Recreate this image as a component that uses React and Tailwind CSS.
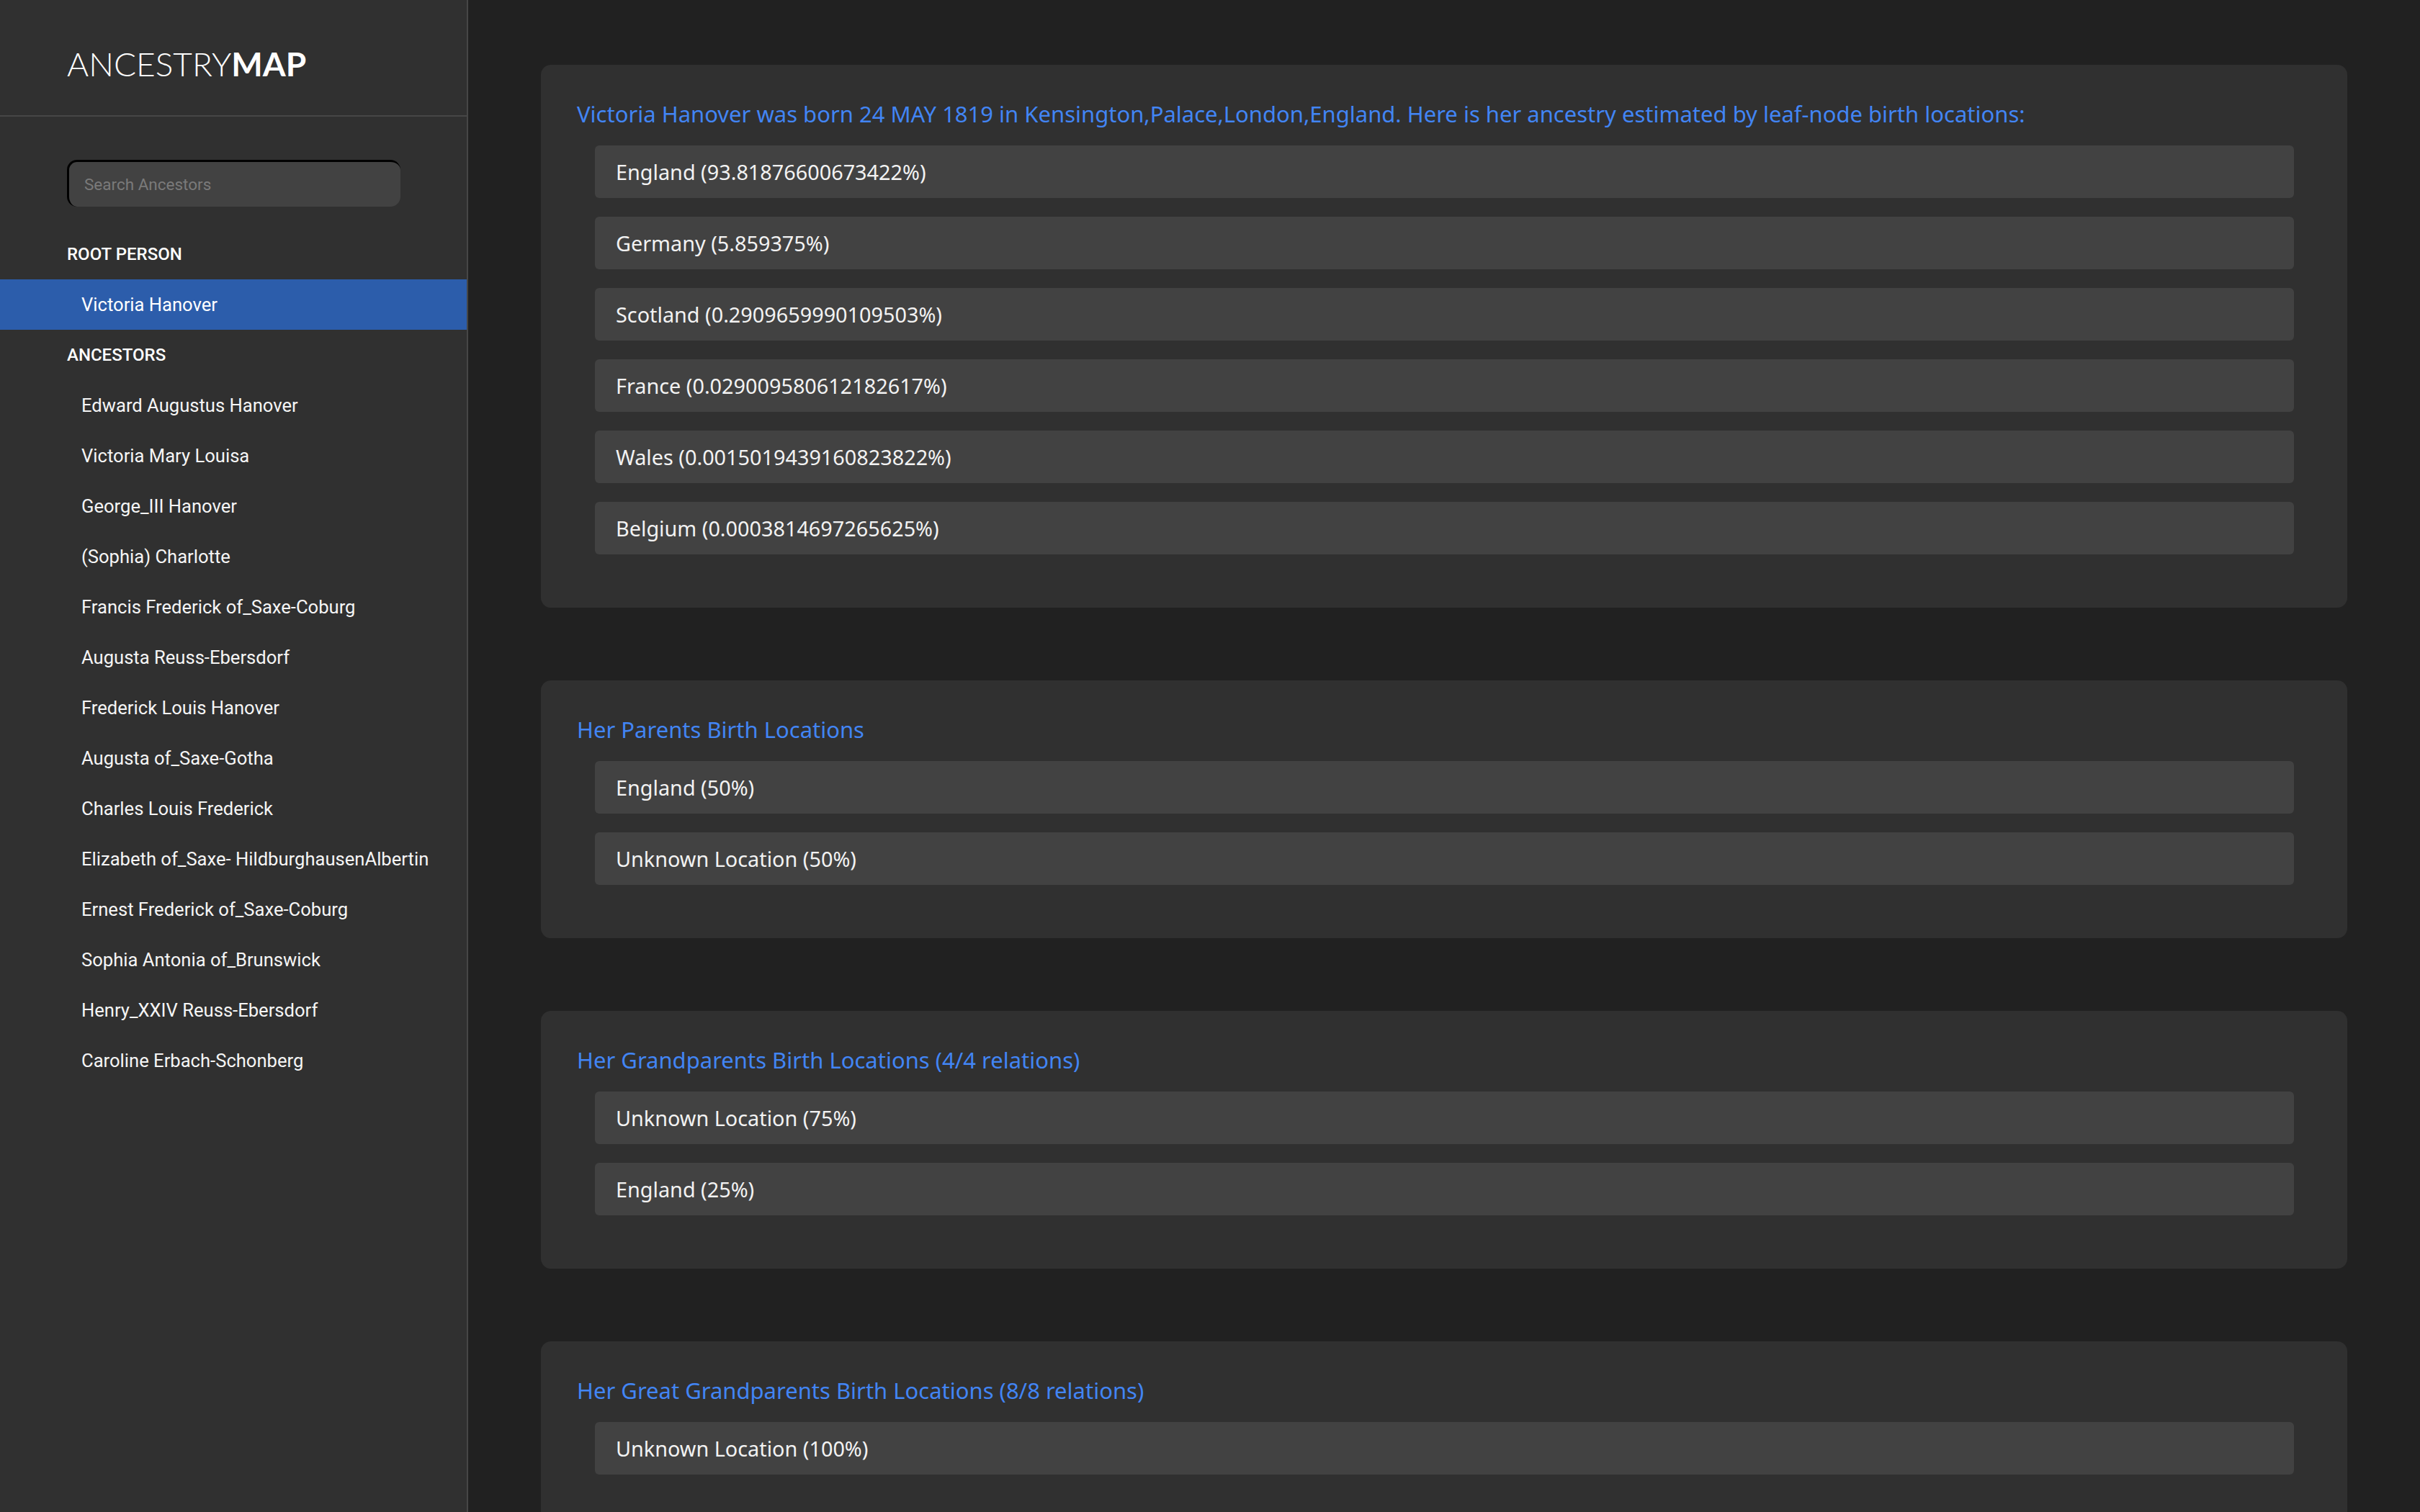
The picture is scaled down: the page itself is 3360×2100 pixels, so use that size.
const ROOT = 'Victoria Hanover';

const ANCESTORS = [
  'Edward Augustus Hanover',
  'Victoria Mary Louisa',
  'George_III Hanover',
  '(Sophia) Charlotte',
  'Francis Frederick of_Saxe-Coburg',
  'Augusta Reuss-Ebersdorf',
  'Frederick Louis Hanover',
  'Augusta of_Saxe-Gotha',
  'Charles Louis Frederick',
  'Elizabeth of_Saxe- HildburghausenAlbertin',
  'Ernest Frederick of_Saxe-Coburg',
  'Sophia Antonia of_Brunswick',
  'Henry_XXIV Reuss-Ebersdorf',
  'Caroline Erbach-Schonberg',
];

const SECTIONS = [
  {
    title:
      'Victoria Hanover was born 24 MAY 1819 in Kensington,Palace,London,England. Here is her ancestry estimated by leaf-node birth locations:',
    rows: [
      'England (93.81876600673422%)',
      'Germany (5.859375%)',
      'Scotland (0.2909659990109503%)',
      'France (0.029009580612182617%)',
      'Wales (0.0015019439160823822%)',
      'Belgium (0.0003814697265625%)',
    ],
  },
  {
    title: 'Her Parents Birth Locations',
    rows: ['England (50%)', 'Unknown Location (50%)'],
  },
  {
    title: 'Her Grandparents Birth Locations (4/4 relations)',
    rows: ['Unknown Location (75%)', 'England (25%)'],
  },
  {
    title: 'Her Great Grandparents Birth Locations (8/8 relations)',
    rows: ['Unknown Location (100%)'],
  },
];

function Sidebar() {
  return (
    <aside className="w-[650px] h-full shrink-0 bg-[#303030] border-r-2 border-[#464646] font-['Roboto','Liberation_Sans',sans-serif] text-white">
      <div className="h-[162px] border-b-2 border-[#464646] pl-[93px] pt-[66px]">
        <h1 className="font-['Lato',sans-serif] text-[46px] leading-none text-white">
          <span className="font-light">ANCESTRY</span>
          <span className="font-bold">MAP</span>
        </h1>
      </div>

      <div className="pt-[60px] pl-[93px]">
        <input
          type="text"
          placeholder="Search Ancestors"
          className="w-[463px] h-[65px] rounded-[14px] bg-[#424242] border-t-[3px] border-l-[3px] border-black pl-[21px] text-[22.5px] text-white placeholder:text-[#7a7a7a] outline-none"
        />
      </div>

      <p className="mt-[31px] h-[70px] flex items-center pl-[93px] text-[24px] font-medium uppercase">Root Person</p>
      <div className="h-[70px] flex items-center pl-[113px] bg-[#2c5dab] text-[25.6px]">{ROOT}</div>

      <p className="h-[70px] flex items-center pl-[93px] text-[24px] font-medium uppercase">Ancestors</p>
      <ul>
        {ANCESTORS.map((name) => (
          <li key={name} className="h-[70px] flex items-center pl-[113px] text-[25.6px] text-[#f5f5f5]">
            {name}
          </li>
        ))}
      </ul>
    </aside>
  );
}

function Section({ title, rows }) {
  return (
    <section className="rounded-[14px] bg-[#303030] px-[50px] pt-[48px] pb-[74px] shrink-0">
      <h2 className="text-[31px] leading-[40px] text-[#4285f4]">{title}</h2>
      <ul className="mt-[24px] pl-[25px] pr-[24px] flex flex-col gap-[26px]">
        {rows.map((r) => (
          <li key={r} className="h-[73px] rounded-[6px] bg-[#424242] px-[29px] flex items-center text-[28.8px] text-[#f2f2f2]">
            {r}
          </li>
        ))}
      </ul>
    </section>
  );
}

export default function App() {
  return (
    <div className="flex h-screen w-full overflow-hidden bg-[#212121]">
      <Sidebar />
      <main className="flex-1 h-full overflow-hidden px-[101px] pt-[90px] flex flex-col gap-[101px] font-['Noto_Sans','Open_Sans',sans-serif]">
        {SECTIONS.map((s) => (
          <Section key={s.title} {...s} />
        ))}
      </main>
    </div>
  );
}
